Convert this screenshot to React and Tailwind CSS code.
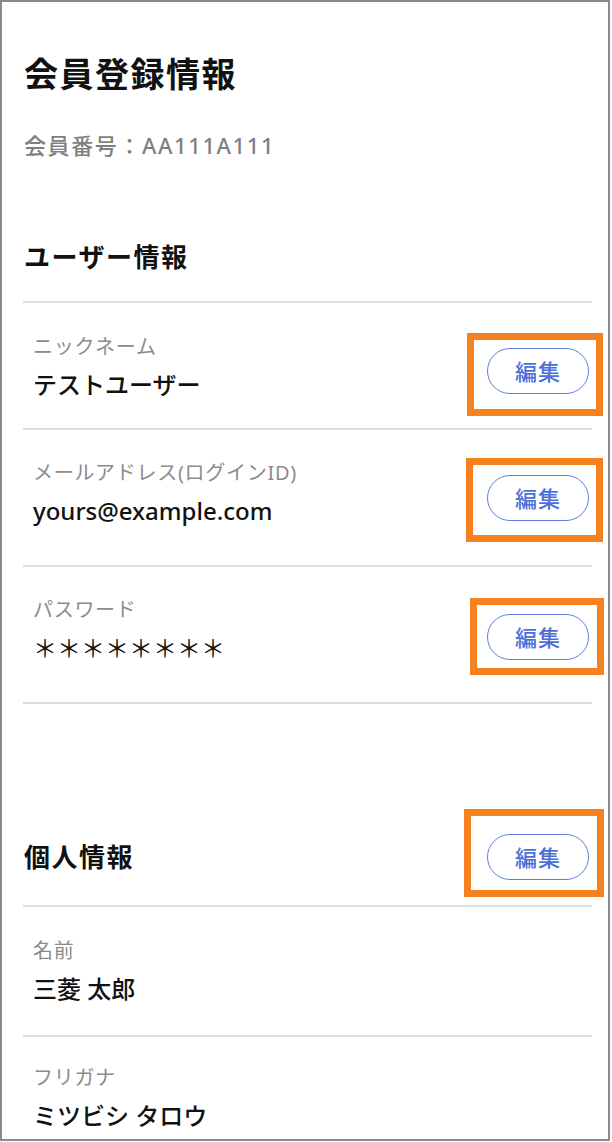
import React from "react";

const font = { fontFamily: '"Noto Sans", "Noto Sans CJK JP", sans-serif' };

function EditButton({ box }) {
  return (
    <div className="relative shrink-0">
      <span className={`pointer-events-none absolute border-[7px] border-[#f6821f] ${box}`} />
      <button className="relative flex h-[46px] w-[102px] items-center justify-center rounded-full border border-[#5d7fe2] bg-white text-[22px] leading-none font-medium tracking-[1px] text-[#4d70d8]">
        編集
      </button>
    </div>
  );
}

function Row({ label, value, h, pt, btn, btnMt, box, valueClass = "" }) {
  return (
    <div className={`flex items-start justify-between border-b-2 border-[#dddddd] ${h}`}>
      <div className={`pl-[10px] ${pt}`}>
        <div className="h-[24px] text-[20px] leading-[24px] tracking-[0.7px] text-[#8c8c8c]">{label}</div>
        <div className={`mt-[11px] h-[30px] text-[24px] leading-[30px] font-medium text-[#111111] ${valueClass}`}>
          {value}
        </div>
      </div>
      {btn && (
        <div className={`mr-[3px] ${btnMt}`}>
          <EditButton box={box} />
        </div>
      )}
    </div>
  );
}

export default function App() {
  return (
    <div className="h-[1142px] w-[612px] bg-white" style={font}>
      <div className="h-[1141px] w-[610px] overflow-hidden border-2 border-[#8a8a8a] bg-white">
        <div className="pl-[21px] pr-[16px]">
          <h1 className="mt-[51px] h-[42px] pl-px text-[34px] leading-[42px] font-bold tracking-[1.5px] text-[#111111]">
            会員登録情報
          </h1>
          <div className="mt-[35px] h-[30px] pl-px text-[22px] leading-[30px] font-medium tracking-[1.6px] text-[#7f7f7f]">
            会員番号：AA111A111
          </div>
          <div className="mt-[81px] h-[62px] border-b-2 border-[#dddddd] pl-px">
            <h2 className="h-[32px] text-[26px] leading-[32px] font-bold tracking-[1.5px] text-[#111111]">ユーザー情報</h2>
          </div>
          <Row
            label="ニックネーム"
            value="テストユーザー"
            h="h-[127px]"
            pt="pt-[32px]"
            btn
            btnMt="mt-[45px]"
            box="-left-[20px] -top-[15px] -right-[14px] -bottom-[22px]"
          />
          <Row
            label="メールアドレス(ログインID)"
            value="yours@example.com"
            h="h-[137px]"
            pt="pt-[31px]"
            btn
            btnMt="mt-[45px]"
            box="-left-[21px] -top-[17px] -right-[14px] -bottom-[21px]"
          />
          <Row
            label="パスワード"
            value="＊＊＊＊＊＊＊＊"
            valueClass="font-normal"
            h="h-[137px]"
            pt="pt-[31px]"
            btn
            btnMt="mt-[47px]"
            box="-left-[17px] -top-[16px] -right-[15px] -bottom-[15px]"
          />
          <div className="mt-[130px] flex items-center justify-between border-b-2 border-[#dddddd] pb-[25px] pl-px">
            <h2 className="text-[26px] leading-[32px] font-bold tracking-[1.5px] text-[#111111]">個人情報</h2>
            <div className="mr-[3px]">
              <EditButton box="-left-[23px] -top-[25px] -right-[15px] -bottom-[17px]" />
            </div>
          </div>
          <Row label="名前" value="三菱 太郎" h="h-[130px]" pt="pt-[32px]" />
          <div className="pl-[10px] pt-[29px]">
            <div className="h-[24px] text-[20px] leading-[24px] tracking-[0.7px] text-[#8c8c8c]">フリガナ</div>
            <div className="mt-[11px] h-[30px] text-[24px] leading-[30px] font-medium text-[#111111]">
              ミツビシ タロウ
            </div>
          </div>
        </div>
      </div>
    </div>
  );
}
